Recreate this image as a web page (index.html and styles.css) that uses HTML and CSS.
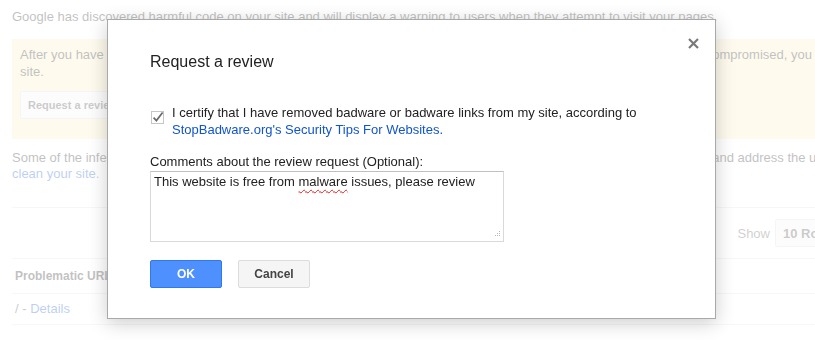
FILE: index.html
```html
<!DOCTYPE html>
<html lang="en">
<head>
<meta charset="utf-8">
<title>Request a review</title>
<link rel="stylesheet" href="styles.css">
</head>
<body>
<div class="page">
  <p class="notice">Google has discovered harmful code on your site and will display a warning to users when they attempt to visit your pages.</p>
  <div class="alert">
    <p class="alert-text">After you have removed the harmful code from your site and taken all the steps to make sure that your site is no longer compromised, you can request a review of your site.</p>
    <button class="btn-bg" type="button">Request a review</button>
  </div>
  <p class="infected">Some of the infected pages on your site may be listed below. Review each page, find the source of the malicious content, and address the underlying issues in order to <a href="#" class="link">clean your site.</a></p>
  <div class="toolbar">
    <span class="show-label">Show</span>
    <div class="select">10 Rows <span class="caret"></span></div>
    <div class="pager">1-1 of 1</div>
  </div>
  <div class="row row-head">Problematic URLs</div>
  <div class="row row-body">/ - <a href="#" class="link">Details</a></div>
</div>
<div class="overlay"></div>
<div class="dialog">
  <svg class="close" width="11" height="11" viewBox="0 0 11 11" aria-label="Close">
    <path d="M1 1 L10 10 M10 1 L1 10" stroke="#7a7a7a" stroke-width="2.2" fill="none"/>
  </svg>
  <h2 class="dialog-title">Request a review</h2>
  <div class="check-row">
    <svg class="checkbox" width="15" height="15" viewBox="0 0 15 15">
      <rect x="1.5" y="1.5" width="12" height="12" fill="#fff" stroke="#c6c6c6" stroke-width="1"/>
      <path d="M3.6 7.6 L6.4 10.6 L12.6 2.6" stroke="#6a6a6a" stroke-width="1.7" fill="none"/>
    </svg>
    <p class="check-label">I certify that I have removed badware or badware links from my site, according to <a href="#" class="dlink">StopBadware.org's Security Tips For Websites.</a></p>
  </div>
  <p class="field-label">Comments about the review request (Optional):</p>
  <div class="textarea">
    <span class="ta-text">This website is free from <span class="misspelled">malware</span> issues, please review</span>
    <svg class="grip" width="7" height="7" viewBox="0 0 7 7">
      <g fill="#b5b5b5">
        <rect x="5" y="0" width="1" height="1"/>
        <rect x="3" y="2" width="1" height="1"/><rect x="5" y="2" width="1" height="1"/>
        <rect x="1" y="4" width="1" height="1"/><rect x="3" y="4" width="1" height="1"/><rect x="5" y="4" width="1" height="1"/>
      </g>
    </svg>
  </div>
  <div class="actions">
    <button class="btn btn-ok" type="button">OK</button>
    <button class="btn btn-cancel" type="button">Cancel</button>
  </div>
</div>
</body>
</html>
```
FILE: styles.css
```css
html, body {
  margin: 0;
  padding: 0;
  height: 340px;
  overflow: hidden;
  background: #fff;
}
body {
  font-family: "Liberation Sans", Arial, sans-serif;
  font-size: 13px;
  color: #222;
}
p { margin: 0; }

.page {
  width: 976px;
  padding: 9px 12px 0;
}
.notice {
  line-height: 16px;
}
.alert {
  margin-top: 14px;
  background: #f9edbe;
  padding: 7px 8px 20px;
}
.alert-text {
  line-height: 17px;
}
.btn-bg {
  display: block;
  margin-top: 11px;
  height: 28px;
  padding: 0 7px;
  font-family: inherit;
  font-size: 11px;
  font-weight: bold;
  color: #444;
  background: #f5f5f5;
  border: 1px solid #dcdcdc;
  border-radius: 2px;
}
.infected {
  margin-top: 11px;
  line-height: 16px;
}
.link {
  color: #15c;
  text-decoration: none;
}
.toolbar {
  margin-top: 25px;
  border-top: 1px solid #e0e0e0;
  height: 50px;
  display: flex;
  align-items: center;
  justify-content: flex-end;
}
.show-label {
  color: #555;
  margin-right: 5px;
}
.select {
  box-sizing: border-box;
  width: 95px;
  height: 28px;
  padding: 0 7px;
  border: 1px solid #dcdcdc;
  border-radius: 2px;
  background: #f5f5f5;
  display: flex;
  align-items: center;
  justify-content: space-between;
  font-size: 13px;
  font-weight: bold;
  color: #444;
}
.caret {
  width: 0;
  height: 0;
  border-left: 4px solid transparent;
  border-right: 4px solid transparent;
  border-top: 4px solid #777;
}
.pager {
  width: 102px;
  margin-left: 16px;
  color: #555;
}
.row {
  border-top: 1px solid #e0e0e0;
  padding-left: 3px;
}
.row-head {
  height: 34px;
  line-height: 34px;
  font-size: 12px;
  font-weight: bold;
  color: #222;
}
.row-body {
  height: 30px;
  line-height: 30px;
  border-bottom: 1px solid #e0e0e0;
  color: #444;
}

.overlay {
  position: fixed;
  inset: 0;
  background: rgba(255, 255, 255, 0.72);
}

.dialog {
  position: absolute;
  left: 107px;
  top: 19px;
  width: 523px;
  padding: 32px 42px 30px;
  background: #fff;
  border: 1px solid #a9a9a9;
  box-shadow: 0 4px 18px rgba(0, 0, 0, 0.2);
}
.close {
  position: absolute;
  top: 18px;
  right: 16px;
}
.dialog-title {
  margin: 0;
  font-size: 16px;
  font-weight: normal;
  line-height: 20px;
  color: #222;
}
.check-row {
  margin-top: 32px;
  display: flex;
  align-items: flex-start;
}
.checkbox {
  flex: none;
  margin-top: 6px;
}
.check-label {
  margin-left: 7px;
  line-height: 17px;
  color: #222;
}
.dlink {
  color: #15c;
  text-decoration: none;
}
.field-label {
  margin-top: 15px;
  line-height: 17px;
}
.textarea {
  box-sizing: border-box;
  margin-top: 1px;
  width: 354px;
  height: 71px;
  padding: 2px 3px 3px;
  border: 1px solid #d9d9d9;
  border-top-color: #c0c0c0;
  display: flex;
  flex-direction: column;
  line-height: 16px;
}
.misspelled {
  text-decoration: underline wavy #e02020;
  text-decoration-thickness: 1px;
  text-underline-offset: 3px;
}
.grip {
  margin-top: auto;
  align-self: flex-end;
  margin-right: -1px;
}
.actions {
  margin-top: 18px;
  display: flex;
  gap: 16px;
}
.btn {
  box-sizing: border-box;
  width: 72px;
  height: 28px;
  padding: 0;
  font-family: inherit;
  font-size: 12px;
  font-weight: bold;
  border-radius: 2px;
}
.btn-ok {
  color: #fff;
  background: #4d90fe;
  border: 1px solid #3079ed;
}
.btn-cancel {
  color: #444;
  background: #f5f5f5;
  border: 1px solid #dcdcdc;
}
```
